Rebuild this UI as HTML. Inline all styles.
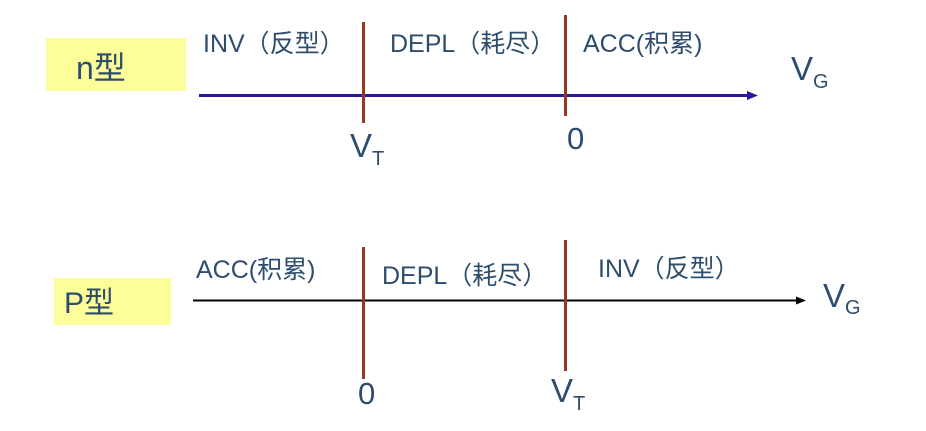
<!DOCTYPE html>
<html><head><meta charset="utf-8"><style>
html,body{margin:0;padding:0;background:#fff;width:926px;height:431px;overflow:hidden}
svg text{font-family:"Liberation Sans","Noto Sans CJK SC",sans-serif;fill:#2d4d6e}
</style></head><body>
<svg width="926" height="431" viewBox="0 0 926 431" xmlns="http://www.w3.org/2000/svg">
<rect x="46" y="38" width="140" height="53" fill="#fdfd9a"/>
<rect x="54" y="278" width="117" height="47" fill="#fdfd9a"/>
<text x="76" y="79" font-size="32">n型</text>
<text x="64" y="313" font-size="30">P型</text>

<line x1="199" y1="95.5" x2="750" y2="95.5" stroke="#2c169c" stroke-width="3"/>
<polygon points="747,91 758,95.5 747,100" fill="#2c169c"/>
<line x1="363.5" y1="22" x2="363.5" y2="123" stroke="#963820" stroke-width="3"/>
<line x1="565.5" y1="15" x2="565.5" y2="116" stroke="#963820" stroke-width="3"/>
<text x="203" y="52" font-size="25">INV（反型）</text>
<text x="390" y="52" font-size="25">DEPL（耗尽）</text>
<text x="583" y="52" font-size="25">ACC(积累)</text>
<text x="350" y="157" font-size="33">V</text><text x="372" y="165" font-size="20">T</text>
<text x="567" y="149" font-size="31">0</text>
<text x="791" y="80" font-size="33">V</text><text x="813" y="88" font-size="20">G</text>

<line x1="193" y1="300.5" x2="798" y2="300.5" stroke="#000" stroke-width="2"/>
<polygon points="796,296.5 806,300.5 796,304.5" fill="#000"/>
<line x1="363.5" y1="247" x2="363.5" y2="379" stroke="#963820" stroke-width="3"/>
<line x1="565.5" y1="240" x2="565.5" y2="371" stroke="#963820" stroke-width="3"/>
<text x="196" y="278" font-size="25">ACC(积累)</text>
<text x="382" y="284" font-size="25">DEPL（耗尽）</text>
<text x="598" y="277" font-size="25">INV（反型）</text>
<text x="358" y="404" font-size="31">0</text>
<text x="551" y="402" font-size="33">V</text><text x="573" y="410" font-size="20">T</text>
<text x="823" y="307" font-size="33">V</text><text x="845" y="314" font-size="20">G</text>
</svg>
</body></html>
